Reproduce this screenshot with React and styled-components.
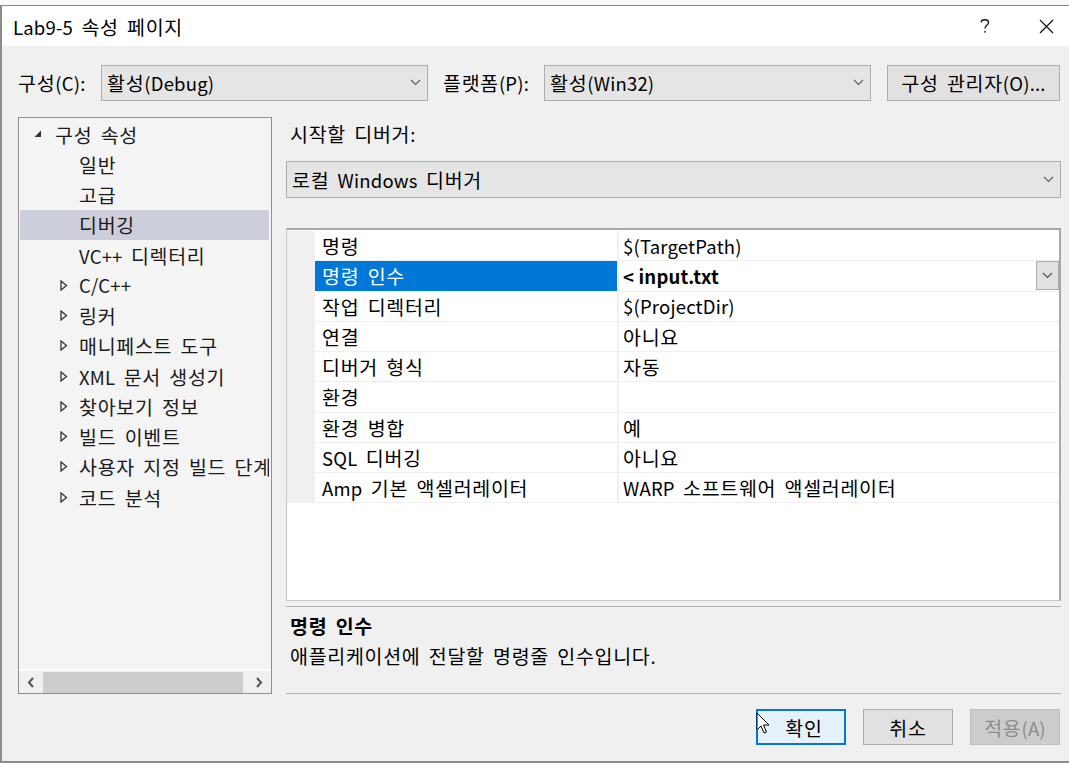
import React from "react";
import styled, { createGlobalStyle } from "styled-components";

const GlobalStyle = createGlobalStyle`
  html, body {
    margin: 0;
    padding: 0;
    background: #f0f0f0;
  }
  body {
    font-family: "Noto Sans CJK KR", "Noto Sans", "Liberation Sans", sans-serif;
    font-size: 18.5px;
    letter-spacing: 0.2px;
    word-spacing: 4px;
    color: #000;
  }
`;

const Hangul = styled.span`
  font-size: 1.054em;
  letter-spacing: 0.7px;
`;

const Run = styled.span`
  white-space: nowrap;
`;

function T({ children }) {
  const parts = String(children).split(/([\u3131-\uD7A3]+)/);
  return (
    <Run>
      {parts.map((part, i) =>
        i % 2 === 1 ? <Hangul key={i}>{part}</Hangul> : part
      )}
    </Run>
  );
}

//  Window frame
const Page = styled.div`
  width: 1069px;
  height: 763px;
  overflow: hidden;
  display: flex;
  flex-direction: column;
  background: #f0f0f0;
`;

const TopStrip = styled.div`
  height: 5px;
  background: #fafafa;
  border-bottom: 1px solid #8a8a8a;
`;

const Window = styled.div`
  flex: 1;
  display: flex;
  flex-direction: column;
  border-left: 2px solid #8c8c8c;
  border-bottom: 2px solid #8c8c8c;
  background: #f0f0f0;
`;

const TitleBar = styled.div`
  height: 40px;
  background: #fff;
  display: flex;
  align-items: center;
  padding-left: 11px;
`;

const TitleText = styled.div`
  flex: 1;
`;

const TitleButton = styled.div`
  width: ${(p) => p.w}px;
  display: flex;
  justify-content: center;
  align-items: center;
`;

const Body = styled.div`
  flex: 1;
  display: flex;
  flex-direction: column;
  padding: 18px 9px 0 16px;
`;

//  Config row
const ConfigRow = styled.div`
  display: flex;
  align-items: center;
  height: 37px;
`;

const Label = styled.div`
  box-sizing: border-box;
  width: ${(p) => p.w}px;
  padding-left: ${(p) => p.pl || 0}px;
  white-space: nowrap;
`;

const Select = styled.div`
  box-sizing: border-box;
  width: ${(p) => (p.w ? `${p.w}px` : "100%")};
  height: ${(p) => p.h || 36}px;
  background: #e5e5e5;
  border: 1px solid #adadad;
  display: flex;
  align-items: center;
  padding: 0 6px 0 5px;
`;

const SelectText = styled.div`
  flex: 1;
  white-space: nowrap;
`;

const Button = styled.div`
  box-sizing: border-box;
  width: ${(p) => p.w}px;
  height: 36px;
  margin-left: ${(p) => p.ml || 0}px;
  display: flex;
  align-items: center;
  justify-content: center;
  position: relative;
  white-space: nowrap;
  background: ${(p) => (p.primary ? "#e5f1fb" : p.disabled ? "#cccccc" : "#e1e1e1")};
  border: ${(p) => (p.primary ? "2px solid #0078d7" : p.disabled ? "1px solid #bfbfbf" : "1px solid #adadad")};
  color: ${(p) => (p.disabled ? "#8d8d8d" : "#000")};
`;

const ButtonLabel = styled.span`
  padding-left: ${(p) => p.pl || 0}px;
`;

//  Main area
const Main = styled.div`
  margin-top: 16px;
  height: 576px;
  display: grid;
  grid-template-columns: 254px 775px;
  column-gap: 14px;
`;

const TreePanel = styled.div`
  box-sizing: border-box;
  border: 1px solid #8f8f8f;
  background: #f4f4f4;
  display: flex;
  flex-direction: column;
  padding-top: 1px;
  overflow: hidden;
`;

const TreeList = styled.div`
  flex: 1;
  overflow: hidden;
`;

const TreeRow = styled.div`
  height: 30.25px;
  display: flex;
  align-items: center;
  margin: 0 2px 0 1px;
  padding-left: ${(p) => p.indent}px;
  background: ${(p) => (p.selected ? "#cccedb" : "transparent")};
  white-space: nowrap;
  color: #1a1a1a;
  overflow: hidden;
`;

const Arrow = styled.span`
  flex: none;
  width: ${(p) => p.w}px;
  display: inline-flex;
  align-items: center;
`;

const HScroll = styled.div`
  height: 22px;
  display: flex;
  align-items: center;
  border-top: 2px solid #fff;
  background: #f0f0f0;
`;

const ScrollBtn = styled.div`
  width: 24px;
  display: flex;
  justify-content: center;
`;

const ScrollThumb = styled.div`
  flex: 1;
  height: 21px;
  background: #cdcdcd;
  margin: 0 4px 0 0;
`;

const RightCol = styled.div`
  display: flex;
  flex-direction: column;
`;

const SectionLabel = styled.div`
  height: 30px;
  display: flex;
  align-items: center;
  padding: 1px 0 0 4px;
`;

const SelectWrap = styled.div`
  margin-top: 13px;
`;

const Grid = styled.div`
  box-sizing: border-box;
  margin-top: 30px;
  height: 373px;
  background: #fff;
  border: 1px solid #c8c8c8;
  border-top: 2px solid #a8a8a8;
  border-right: 2px solid #a8a8a8;
  padding-top: 1px;
  display: grid;
  grid-template-columns: 28px 1fr;
`;

const Margin = styled.div`
  background: #f0f0f0;
  height: 272px;
`;

const Rows = styled.div`
  display: flex;
  flex-direction: column;
`;

const PropRow = styled.div`
  height: 30.25px;
  display: grid;
  grid-template-columns: 304px 1fr;
`;

const NameCell = styled.div`
  display: flex;
  align-items: center;
  padding-left: 7px;
  white-space: nowrap;
  border-bottom: 1px solid #f0f0f0;
  border-right: 2px solid #f0f0f0;
  background: ${(p) => (p.selected ? "#0078d7" : "#fff")};
  color: ${(p) => (p.selected ? "#fff" : "#000")};
`;

const ValueCell = styled.div`
  display: flex;
  align-items: center;
  padding-left: 4px;
  white-space: nowrap;
  font-weight: ${(p) => (p.bold ? 700 : 400)};
  word-spacing: ${(p) => (p.bold ? "0" : "4px")};
  border-bottom: 1px solid #f0f0f0;
`;

const ValueText = styled.div`
  flex: 1;
`;

const CellDrop = styled.div`
  box-sizing: border-box;
  width: 23px;
  height: 29px;
  background: #e1e1e1;
  border: 1px solid #adadad;
  display: flex;
  align-items: center;
  justify-content: center;
`;

const Description = styled.div`
  box-sizing: border-box;
  margin-top: 5px;
  height: 88px;
  border-top: 1px solid #b0b0b0;
  border-bottom: 1px solid #b0b0b0;
  background: #f0f0f0;
  padding: 4px 0 0 4px;
`;

const DescTitle = styled.div`
  font-weight: 700;
  height: 28px;
  display: flex;
  align-items: center;
`;

const DescText = styled.div`
  height: 32px;
  display: flex;
  align-items: center;
`;

//  Footer
const Footer = styled.div`
  margin-top: 16px;
  display: flex;
  justify-content: flex-end;
  gap: 17px;
`;

const Cursor = styled.svg`
  position: absolute;
  left: -2px;
  top: 1px;
`;

const Chevron = ({ color = "#606060" }) => (
  <svg width="11" height="7" viewBox="0 0 11 7">
    <path d="M1 1 L5.5 5.5 L10 1" fill="none" stroke={color} strokeWidth="1.2" />
  </svg>
);

const Expanded = () => (
  <svg width="8" height="8" viewBox="0 0 8 8">
    <path d="M7 0.5 L7 7 L0.5 7 Z" fill="#333" />
  </svg>
);

const Collapsed = () => (
  <svg width="8" height="11" viewBox="0 0 8 11">
    <path d="M1 1 L6.5 5.5 L1 10 Z" fill="none" stroke="#333" strokeWidth="1.3" />
  </svg>
);

const treeItems = [
  { label: "구성 속성", level: 0, expanded: true },
  { label: "일반", level: 1 },
  { label: "고급", level: 1 },
  { label: "디버깅", level: 1, selected: true },
  { label: "VC++ 디렉터리", level: 1 },
  { label: "C/C++", level: 1, collapsed: true },
  { label: "링커", level: 1, collapsed: true },
  { label: "매니페스트 도구", level: 1, collapsed: true },
  { label: "XML 문서 생성기", level: 1, collapsed: true },
  { label: "찾아보기 정보", level: 1, collapsed: true },
  { label: "빌드 이벤트", level: 1, collapsed: true },
  { label: "사용자 지정 빌드 단계", level: 1, collapsed: true },
  { label: "코드 분석", level: 1, collapsed: true },
];

const props = [
  { name: "명령", value: "$(TargetPath)" },
  { name: "명령 인수", value: "< input.txt", selected: true },
  { name: "작업 디렉터리", value: "$(ProjectDir)" },
  { name: "연결", value: "아니요" },
  { name: "디버거 형식", value: "자동" },
  { name: "환경", value: "" },
  { name: "환경 병합", value: "예" },
  { name: "SQL 디버깅", value: "아니요" },
  { name: "Amp 기본 액셀러레이터", value: "WARP 소프트웨어 액셀러레이터" },
];

function TreeItem({ item }) {
  if (item.level === 0) {
    return (
      <TreeRow indent={14}>
        <Arrow w={21}>
          <Expanded />
        </Arrow>
        <T>{item.label}</T>
      </TreeRow>
    );
  }
  return (
    <TreeRow indent={item.collapsed ? 40 : 59} selected={item.selected}>
      {item.collapsed && (
        <Arrow w={19}>
          <Collapsed />
        </Arrow>
      )}
      <T>{item.label}</T>
    </TreeRow>
  );
}

export default function App() {
  return (
    <Page>
      <GlobalStyle />
      <TopStrip />
      <Window>
        <TitleBar>
          <TitleText>
            <T>Lab9-5 속성 페이지</T>
          </TitleText>
          <TitleButton w={76}>
            <svg width="10" height="16" viewBox="0 0 10 16">
              <path
                d="M1.2 4.2 C1.2 1.2 8.6 0.6 8.6 4.4 C8.6 7 5 7.2 5 10.4"
                fill="none"
                stroke="#111"
                strokeWidth="1.3"
              />
              <circle cx="5" cy="13.8" r="0.9" fill="#111" />
            </svg>
          </TitleButton>
          <TitleButton w={46}>
            <svg width="15" height="15" viewBox="0 0 15 15">
              <path d="M1 1 L14 14 M14 1 L1 14" stroke="#111" strokeWidth="1.2" />
            </svg>
          </TitleButton>
        </TitleBar>
        <Body>
          <ConfigRow>
            <Label w={83}>
              <T>구성(C):</T>
            </Label>
            <Select w={327}>
              <SelectText>
                <T>활성(Debug)</T>
              </SelectText>
              <Chevron />
            </Select>
            <Label w={116} pl={15}>
              <T>플랫폼(P):</T>
            </Label>
            <Select w={327}>
              <SelectText>
                <T>활성(Win32)</T>
              </SelectText>
              <Chevron />
            </Select>
            <Button w={173} ml={16}>
              <T>구성 관리자(O)...</T>
            </Button>
          </ConfigRow>

          <Main>
            <TreePanel>
              <TreeList>
                {treeItems.map((item) => (
                  <TreeItem key={item.label} item={item} />
                ))}
              </TreeList>
              <HScroll>
                <ScrollBtn>
                  <svg width="8" height="11" viewBox="0 0 8 11">
                    <path d="M6 1 L2 5.5 L6 10" fill="none" stroke="#555" strokeWidth="2" />
                  </svg>
                </ScrollBtn>
                <ScrollThumb />
                <ScrollBtn>
                  <svg width="8" height="11" viewBox="0 0 8 11">
                    <path d="M2 1 L6 5.5 L2 10" fill="none" stroke="#555" strokeWidth="2" />
                  </svg>
                </ScrollBtn>
              </HScroll>
            </TreePanel>

            <RightCol>
              <SectionLabel>
                <T>시작할 디버거:</T>
              </SectionLabel>
              <SelectWrap>
                <Select h={37}>
                  <SelectText>
                    <T>로컬 Windows 디버거</T>
                  </SelectText>
                  <Chevron />
                </Select>
              </SelectWrap>

              <Grid>
                <Margin />
                <Rows>
                  {props.map((p) => (
                    <PropRow key={p.name}>
                      <NameCell selected={p.selected}>
                        <T>{p.name}</T>
                      </NameCell>
                      <ValueCell bold={p.selected}>
                        <ValueText>
                          <T>{p.value}</T>
                        </ValueText>
                        {p.selected && (
                          <CellDrop>
                            <Chevron color="#505050" />
                          </CellDrop>
                        )}
                      </ValueCell>
                    </PropRow>
                  ))}
                </Rows>
              </Grid>

              <Description>
                <DescTitle>
                  <T>명령 인수</T>
                </DescTitle>
                <DescText>
                  <T>애플리케이션에 전달할 명령줄 인수입니다.</T>
                </DescText>
              </Description>
            </RightCol>
          </Main>

          <Footer>
            <Button w={90} primary>
              <Cursor width="16" height="24" viewBox="0 0 16 24">
                <path
                  d="M1 1 L1 18 L5 14 L8 21 L10.5 20 L7.5 13 L13 13 Z"
                  fill="#fff"
                  stroke="#000"
                  strokeWidth="1"
                  strokeLinejoin="round"
                />
              </Cursor>
              <ButtonLabel pl={6}>
                <T>확인</T>
              </ButtonLabel>
            </Button>
            <Button w={90}>
              <T>취소</T>
            </Button>
            <Button w={90} disabled>
              <T>적용(A)</T>
            </Button>
          </Footer>
        </Body>
      </Window>
    </Page>
  );
}
